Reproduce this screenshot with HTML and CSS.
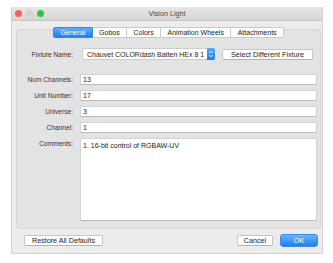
FILE: index.html
```html
<!DOCTYPE html>
<html lang="en">
<head>
  <meta charset="UTF-8" />
  <title>Vision Light</title>
  <link rel="stylesheet" href="styles.css">
</head>
<body>

  <div class="window">
    <!-- Title bar -->
    <div class="titlebar">
      <div class="lights">
        <span class="light close"></span>
        <span class="light min"></span>
        <span class="light zoom"></span>
      </div>
      <div class="title">Vision Light</div>
      <div></div>
    </div>

    <div class="window-body">
      <div class="panel">
        <div class="tabs">
          <span class="tab active">General</span>
          <span class="tab">Gobos</span>
          <span class="tab">Colors</span>
          <span class="tab">Animation Wheels</span>
          <span class="tab">Attachments</span>
        </div>

        <form class="form">
          <label class="label fixture-label">Fixture Name:</label>
          <div class="fixture-row">
            <div class="popup">
              <span class="popup-text">Chauvet COLORdash Batten HEx 8 1</span>
              <span class="stepper">
                <svg width="8" height="12" viewBox="0 0 8 12">
                  <path d="M2.3 5 L4 3.3 L5.7 5" fill="none" stroke="#fff" stroke-width="0.9"/>
                  <path d="M2.3 7 L4 8.7 L5.7 7" fill="none" stroke="#fff" stroke-width="0.9"/>
                </svg>
              </span>
            </div>
            <button type="button" class="btn select-btn">Select Different Fixture</button>
          </div>

          <label class="label">Num Channels:</label>
          <input class="field" type="text" value="13" />

          <label class="label">Unit Number:</label>
          <input class="field" type="text" value="17" />

          <label class="label">Universe:</label>
          <input class="field" type="text" value="3" />

          <label class="label">Channel:</label>
          <input class="field" type="text" value="1" />

          <label class="label comments-label">Comments:</label>
          <textarea class="field comments">1. 16-bit control of RGBAW-UV</textarea>
        </form>
      </div>

      <!-- Footer buttons -->
      <div class="footer">
        <button type="button" class="btn restore-btn">Restore All Defaults</button>
        <div class="footer-right">
          <button type="button" class="btn cancel-btn">Cancel</button>
          <button type="button" class="btn ok-btn">OK</button>
        </div>
      </div>
    </div>
  </div>

</body>
</html>
```

FILE: styles.css
```css
body {
  margin: 0;
  background: #fff;
  font-family: "Liberation Sans", Arial, sans-serif;
  color: #262626;
}
.window {
  margin: 7px 0 0 11px;
  width: 312px;
  height: 247px;
  box-sizing: border-box;
  background: #ececec;
  border: 1px solid #d2d2d2;
  border-top: none;
  display: flex;
  flex-direction: column;
}
.titlebar {
  height: 13px;
  background: linear-gradient(#e6e6e6, #d6d6d6);
  border-bottom: 1px solid #c4c4c4;
  display: grid;
  grid-template-columns: 1fr auto 1fr;
  align-items: center;
  flex-shrink: 0;
}
.lights {
  display: flex;
  gap: 4px;
  padding-left: 3px;
}
.light {
  width: 7px;
  height: 7px;
  border-radius: 50%;
}
.close { background: #fc5f57; }
.min { background: #d3d3d3; }
.zoom { background: #2dc840; }
.title {
  font-size: 7.2px;
  color: #4a4a4a;
}
.window-body {
  flex: 1;
  padding: 8px 1px 0 4px;
  display: flex;
  flex-direction: column;
}
.panel {
  height: 200px;
  box-sizing: border-box;
  background: #e3e3e3;
  border: 1px solid #d8d8d8;
  border-radius: 3px;
}
.tabs {
  display: flex;
  justify-content: center;
  margin-top: -3px;
}
.tab {
  height: 9px;
  line-height: 9px;
  padding: 0 6.4px;
  font-size: 7px;
  color: #222;
  background: #fff;
  border: 1px solid #c9c9c9;
  border-left: none;
}
.tab:first-child {
  border-left: 1px solid #c9c9c9;
  border-radius: 2px 0 0 2px;
}
.tab:last-child {
  border-radius: 0 2px 2px 0;
}
.tab.active {
  color: #fff;
  background: linear-gradient(#64acf9, #1b7ff5);
  border-color: #2f86f0;
}
.form {
  margin-top: 10px;
  padding-right: 3px;
  display: grid;
  grid-template-columns: 56px 1fr;
  column-gap: 7px;
  row-gap: 5px;
  align-items: center;
}
.label {
  font-size: 6.6px;
  color: #333;
  text-align: right;
}
.fixture-label,
.fixture-row {
  margin-bottom: 9px;
}
.fixture-row {
  display: flex;
  align-items: center;
}
.popup {
  margin-left: 2px;
  width: 133px;
  height: 12px;
  box-sizing: border-box;
  background: #fff;
  border: 1px solid #cdcdcd;
  border-radius: 2px;
  display: flex;
  align-items: center;
}
.popup-text {
  flex: 1;
  padding-left: 4px;
  font-size: 7px;
  white-space: nowrap;
  overflow: hidden;
}
.stepper {
  width: 8px;
  height: 12px;
  margin: -1px -1px -1px 0;
  background: linear-gradient(#5aa7fa, #1a7ef5);
  border-radius: 0 2px 2px 0;
  display: flex;
}
.btn {
  font-family: "Liberation Sans", Arial, sans-serif;
  font-size: 7.2px;
  color: #222;
  background: #fff;
  border: 1px solid #c6c6c6;
  border-bottom-color: #b4b4b4;
  border-radius: 2px;
  padding: 0;
  height: 11px;
  line-height: 9px;
}
.select-btn {
  margin-left: 7px;
  width: 91px;
}
.field {
  height: 11px;
  box-sizing: border-box;
  font-family: "Liberation Sans", Arial, sans-serif;
  font-size: 7px;
  color: #222;
  padding: 0 2px;
  margin: 0;
  background: #fff;
  border: 1px solid #d4d4d4;
  border-bottom-color: #b9b9b9;
  outline: none;
}
.comments-label {
  align-self: start;
  padding-top: 2px;
}
.comments {
  height: 83px;
  resize: none;
  padding: 3px 2px;
  line-height: 8px;
}
.footer {
  flex: 1;
  display: flex;
  align-items: center;
  justify-content: space-between;
  padding: 0 3px 1px 8px;
}
.footer-right {
  display: flex;
  align-items: center;
  gap: 7px;
}
.restore-btn {
  width: 79px;
}
.cancel-btn {
  width: 36px;
}
.ok-btn {
  width: 38px;
  height: 13px;
  color: #fff;
  background: linear-gradient(#6cb3fb, #1b80f6);
  border-color: #3a8cf0;
  border-radius: 3px;
}
```
